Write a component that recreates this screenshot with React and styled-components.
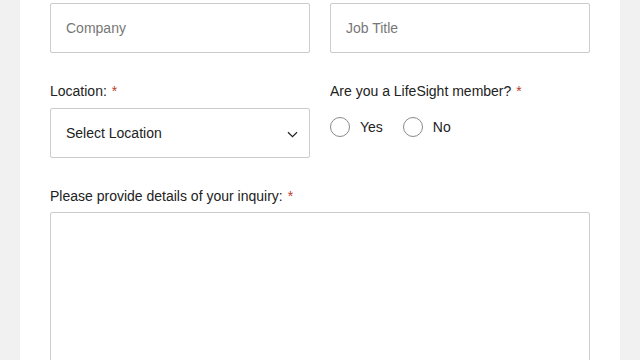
import React from "react";
import styled, { createGlobalStyle } from "styled-components";

const GlobalStyle = createGlobalStyle`
  html, body {
    margin: 0;
    padding: 0;
    background: #f1f1f1;
    font-family: "Liberation Sans", Arial, sans-serif;
    overflow: hidden;
  }
`;

const Page = styled.div`
  height: 360px;
  padding: 0 20px;
  background: #f1f1f1;
`;

const Panel = styled.div`
  height: 100%;
  background: #ffffff;
  padding: 3px 30px 0;
  box-sizing: border-box;
`;

const FormGrid = styled.div`
  display: grid;
  grid-template-columns: 260px 260px;
  column-gap: 20px;
  row-gap: 29px;
`;

const Field = styled.div`
  display: flex;
  flex-direction: column;
  grid-column: ${({ wide }) => (wide ? "1 / span 2" : "auto")};
`;

const Label = styled.label`
  font-size: 14px;
  line-height: 18px;
  color: #222222;
  margin-bottom: ${({ gap }) => gap ?? 8}px;
`;

const Required = styled.span`
  color: #c0392b;
  margin-left: 5px;
`;

const TextInput = styled.input`
  box-sizing: border-box;
  height: 50px;
  width: 100%;
  border: 1px solid #cccccc;
  border-radius: 2px;
  padding: 0 15px;
  font-family: inherit;
  font-size: 14px;
  color: #222222;
  outline: none;

  &::placeholder {
    color: #777777;
  }
`;

const SelectBox = styled.div`
  box-sizing: border-box;
  height: 50px;
  border: 1px solid #cccccc;
  border-radius: 2px;
  padding: 0 11px 0 15px;
  display: flex;
  align-items: center;
  justify-content: space-between;
  font-size: 14px;
  line-height: 16px;
  color: #222222;
`;

const RadioGroup = styled.div`
  display: flex;
  align-items: center;
  gap: 20px;
  margin-top: 9px;
`;

const RadioOption = styled.label`
  display: flex;
  align-items: center;
  gap: 10px;
  font-size: 14px;
  color: #222222;
`;

const RadioCircle = styled.span`
  box-sizing: border-box;
  width: 20px;
  height: 20px;
  border-radius: 50%;
  border: 1px solid #8a8a8a;
  background: #ffffff;
`;

const TextArea = styled.textarea`
  box-sizing: border-box;
  width: 100%;
  height: 200px;
  border: 1px solid #cccccc;
  border-radius: 2px;
  resize: none;
  outline: none;
  font-family: inherit;
  font-size: 14px;
`;

const ChevronIcon = styled.svg`
  margin-top: 2px;
`;

const Chevron = () => (
  <ChevronIcon width="11" height="7" viewBox="0 0 11 7" fill="none">
    <path d="M1 1.2 L5.5 5.6 L10 1.2" stroke="#222" strokeWidth="1.2" />
  </ChevronIcon>
);

const App = () => (
  <>
    <GlobalStyle />
    <Page>
      <Panel>
        <FormGrid>
          <Field>
            <TextInput placeholder="Company" />
          </Field>
          <Field>
            <TextInput placeholder="Job Title" />
          </Field>
          <Field>
            <Label>
              Location:<Required>*</Required>
            </Label>
            <SelectBox>
              <span>Select Location</span>
              <Chevron />
            </SelectBox>
          </Field>
          <Field>
            <Label>
              Are you a LifeSight member?<Required>*</Required>
            </Label>
            <RadioGroup>
              <RadioOption>
                <RadioCircle />
                Yes
              </RadioOption>
              <RadioOption>
                <RadioCircle />
                No
              </RadioOption>
            </RadioGroup>
          </Field>
          <Field wide>
            <Label gap={7}>
              Please provide details of your inquiry:<Required>*</Required>
            </Label>
            <TextArea />
          </Field>
        </FormGrid>
      </Panel>
    </Page>
  </>
);

export default App;
